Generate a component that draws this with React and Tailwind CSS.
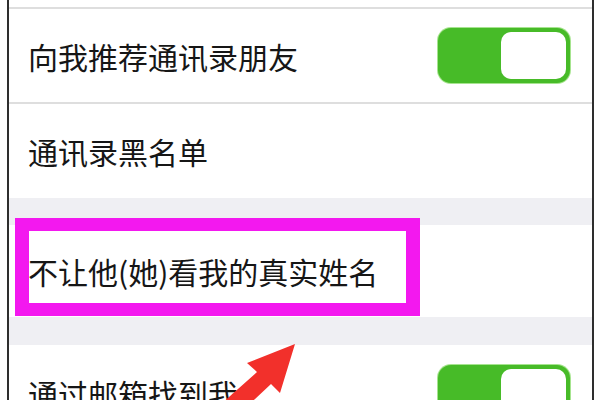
export default function App() {
    return (
        <div className="relative w-[600px] h-[400px] overflow-hidden bg-white" style={{ fontFamily: '"Noto Sans CJK SC", "Noto Sans", sans-serif' }}>
            {/* phone screen frame */}
            <div className="ml-[7px] w-[587px] h-full border-x-2 border-[#2e2e2e] bg-white">
                <div className="h-[7px] bg-white" />
                <div className="h-[2px] bg-[#dedede]" />

                <Row label="向我推荐通讯录朋友" toggle className="h-[95px] border-b-2 border-[#dedede]" />
                <Row label="通讯录黑名单" className="h-[94px]" />

                <div className="h-[27px] bg-[#efeff3]" />

                <Row label="不让他(她)看我的真实姓名" className="h-[92px]" />

                <div className="h-[28px] bg-[#efeff3]" />

                <Row label="通过邮箱找到我" toggle className="h-[95px]" />
            </div>

            {/* magenta highlight */}
            <div className="absolute left-[15px] top-[218px] w-[405px] h-[98px] border-x-[14px] border-y-[13px] border-[#f318ef]" />

            {/* red arrow */}
            <svg className="absolute left-0 top-0" width="600" height="400" viewBox="0 0 600 400">
                <polygon
                    points="295,344 247,363 257,372 220,405 238,415 271,384 280,393"
                    fill="#f2302b"
                />
            </svg>
        </div>
    );
}

function Row({ label, toggle, className }) {
    return (
        <div className={`flex items-center justify-between pl-[19px] pr-[22px] bg-white ${className}`}>
            <span className="text-[30px] leading-none text-[#161616]">{label}</span>
            {toggle && <Toggle />}
        </div>
    );
}

function Toggle() {
    return (
        <div className="w-[132px] h-[55px] rounded-[13px] bg-[#47bb28] p-[4px] flex justify-end shadow-[0_0_0_1px_#a6e48f]">
            <div className="w-[65px] h-full rounded-[10px] bg-white" />
        </div>
    );
}
